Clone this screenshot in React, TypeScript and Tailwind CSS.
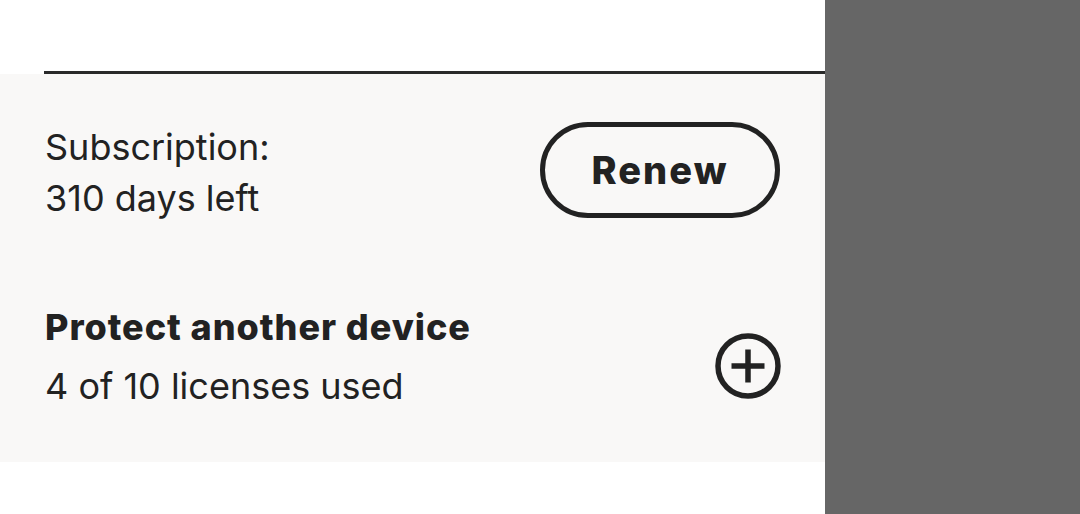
import React from "react";

function PlusCircle() {
  return (
    <svg width="66" height="66" viewBox="0 0 66 66" fill="none" stroke="#222" strokeWidth="5.5">
      <circle cx="33" cy="33" r="30" />
      <path d="M33 16.5v33M16.5 33h33" />
    </svg>
  );
}

export default function App() {
  return (
    <div
      className="flex h-[514px] w-[1080px] bg-white text-[#222]"
      style={{ fontFamily: "Inter, 'Noto Sans', sans-serif" }}
    >
      <div className="flex w-[825px] flex-col">
        <div className="h-[71px] shrink-0" />
        <div className="ml-[44px] h-[3px] bg-[#2a2a2a]" />
        <div className="bg-[#f9f8f7] pl-[45px] pr-[45px] pt-[48px] pb-[46px]">
          {/* subscription row */}
          <div className="flex items-start justify-between">
            <div className="text-[36px] leading-[51px]">
              <p>Subscription:</p>
              <p>310 days left</p>
            </div>
            <button
              type="button"
              className="flex h-[96px] w-[240px] items-center justify-center rounded-full border-[5px] border-[#222] text-[38px] font-extrabold tracking-[2px]"
            >
              Renew
            </button>
          </div>

          {/* devices row */}
          <div className="mt-[74px] flex items-start justify-between">
            <div className="text-[36px] leading-[59px]">
              <p className="font-extrabold tracking-[0.95px]">Protect another device</p>
              <p>4 of 10 licenses used</p>
            </div>
            <div className="mt-[35px] mr-[-1px]">
              <PlusCircle />
            </div>
          </div>
        </div>
      </div>
      <div className="flex-1 bg-[#666666]" />
    </div>
  );
}
